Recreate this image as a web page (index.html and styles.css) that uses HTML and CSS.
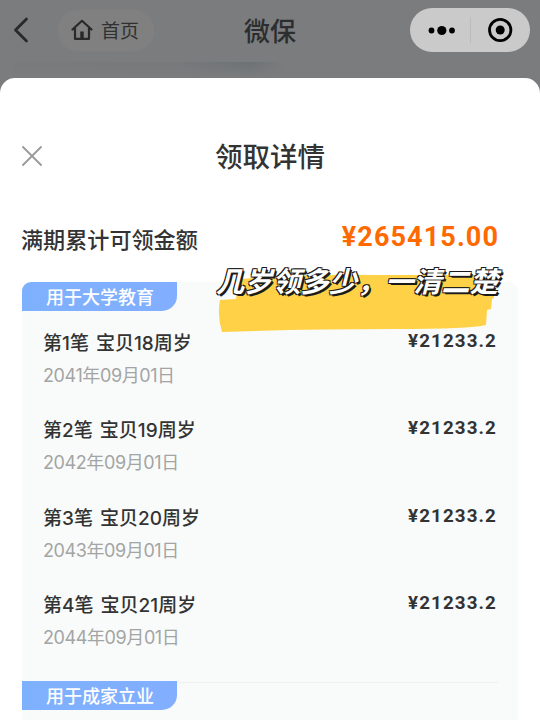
FILE: index.html
```html
<!DOCTYPE html>
<html lang="zh-CN">
<head>
    <meta charset="UTF-8">
    <meta name="viewport" content="width=device-width, initial-scale=1.0">
    <title>微保 - 领取详情</title>
    <link rel="stylesheet" href="styles.css">
</head>
<body>

<div class="page">
    <div class="navbar">
        <svg class="back" width="16" height="26" viewBox="0 0 16 26"><path d="M13.5 2 L2.5 13 L13.5 24"/></svg>
        <div class="home">
            <svg width="22" height="22" viewBox="0 0 22 22"><path d="M1.5 10.5 L11 1.8 L20.5 10.5 M4 9.5 V19.8 H18 V9.5"/><path d="M11 19 V12.5" class="door"/></svg>
            <span>首页</span>
        </div>
        <h1 class="app-name">微保</h1>
        <div class="capsule">
            <svg width="120" height="44" viewBox="0 0 120 44">
                <circle cx="21.5" cy="22.5" r="2.9"/>
                <circle cx="31.8" cy="22.5" r="4.6"/>
                <circle cx="42" cy="22.5" r="2.9"/>
                <path d="M60.5 9 V35" class="split"/>
                <circle cx="90.2" cy="22" r="10.7" class="ring"/>
                <circle cx="90.2" cy="22" r="4.5"/>
            </svg>
        </div>
    </div>
    <div class="banner"></div>

    <div class="sheet">
        <div class="sheet-head">
            <svg class="close" width="20" height="20" viewBox="0 0 20 20"><path d="M1 1 L19 19 M19 1 L1 19"/></svg>
            <h2>领取详情</h2>
        </div>

        <div class="total">
            <span class="total-label">满期累计可领金额</span>
            <span class="total-money">¥265415.00</span>
        </div>

        <div class="plan">
            <div class="tag tag-first">用于大学教育</div>
            <ul class="list">
                <li>
                    <div><p class="name">第1笔 宝贝18周岁</p><p class="date">2041年09月01日</p></div>
                    <span class="money">¥21233.2</span>
                </li>
                <li>
                    <div><p class="name">第2笔 宝贝19周岁</p><p class="date">2042年09月01日</p></div>
                    <span class="money">¥21233.2</span>
                </li>
                <li>
                    <div><p class="name">第3笔 宝贝20周岁</p><p class="date">2043年09月01日</p></div>
                    <span class="money">¥21233.2</span>
                </li>
                <li>
                    <div><p class="name">第4笔 宝贝21周岁</p><p class="date">2044年09月01日</p></div>
                    <span class="money">¥21233.2</span>
                </li>
            </ul>
            <div class="next">
                <div class="tag">用于成家立业</div>
            </div>
        </div>
    </div>

    <!-- marker note over the list -->
    <div class="note">
        <svg width="290" height="76" viewBox="0 0 290 76">
            <path d="M24 17 Q80 12 160 13 L279 13 L279 36 L277 37 L276 47 L272 48 L271 63 Q255 67 180 67 Q90 67 7 70 Q2 54 5 38 L21 37 L22 30 L25 29 Z"/>
        </svg>
        <p>几岁领多少，一清二楚</p>
    </div>
</div>

</body>
</html>
```
FILE: styles.css
```css
* { box-sizing: border-box; margin: 0; padding: 0; }
body { font-family: "Noto Sans CJK SC", sans-serif; color: #333; background: #7b7c7e; }
svg { display: block; flex: none; fill: none; }

.page { position: relative; width: 540px; height: 720px; overflow: hidden; background: #7b7c7e; }

.navbar { display: flex; align-items: center; height: 62px; padding: 0 10px 2px 13px; }
.back { stroke: #29292a; stroke-width: 2.8; stroke-linecap: round; stroke-linejoin: round; }
.home { display: flex; align-items: center; gap: 8px; width: 98px; height: 43px; margin-left: 28px; padding-left: 13px; border-radius: 22px; background: #808080; border: 1px solid #7d7e7f; font-size: 19px; line-height: 26px; color: #303031; }
.home svg { stroke: #29292a; stroke-width: 2.2; stroke-linejoin: round; stroke-linecap: round; }
.home .door { stroke-width: 3.5; stroke-linecap: butt; }
.app-name { margin-left: 89px; font-size: 26px; font-weight: 500; line-height: 40px; color: #2c2d2e; }
.capsule { margin-left: auto; border-radius: 22px; background: #cacaca; }
.capsule svg { fill: #000; }
.capsule .split { stroke: #bcbcbc; stroke-width: 1; }
.capsule .ring { fill: none; stroke: #000; stroke-width: 2.8; }

.banner { height: 16px; margin-left: 14px; width: 270px; background: linear-gradient(rgba(123, 124, 126, 0), #7b7c7e), linear-gradient(90deg, #797a7c 0%, #77797b 60%, #6c7274 88%, #7b7c7e 100%); }

.sheet { height: 642px; padding: 0 22px; border-radius: 15px 15px 0 0; background: #fff; }
.sheet-head { display: flex; align-items: center; height: 156px; }
.close { stroke: #999; stroke-width: 1.8; stroke-linecap: round; }
.sheet-head h2 { flex: 1; padding: 0 20px 2px 0; text-align: center; font-size: 27.5px; font-weight: 500; color: #333; }

.total { display: flex; justify-content: space-between; height: 48px; padding-right: 19px; }
.total-label { margin-left: -1px; font-size: 22.1px; font-weight: 500; line-height: 9px; }
.total-money { font-family: Roboto, sans-serif; font-size: 27px; font-weight: 700; line-height: 7px; letter-spacing: 1.1px; color: #ff6a00; }

.plan { height: 500px; border-radius: 9px; background: #f9fbfa; }
.tag { width: 155px; height: 29px; padding-left: 24px; border-radius: 0 0 15px 0; background: linear-gradient(90deg, #7eb1fd, #82aeff); color: #fff; font-size: 18px; font-weight: 500; line-height: 28px; }
.tag-first { border-top-left-radius: 9px; }

.list { height: 370px; padding: 17px 21px 0 21px; list-style: none; }
.list li { display: flex; justify-content: space-between; height: 87.3px; }
.name { font-family: Inter, "Noto Sans CJK SC", sans-serif; font-size: 19px; font-weight: 500; line-height: 32px; word-spacing: 2px; }
.date { font-family: Inter, "Noto Sans CJK SC", sans-serif; font-size: 18px; font-weight: 400; line-height: 32px; letter-spacing: -0.4px; color: #a3a4a4; }
.money { font-family: Roboto, sans-serif; font-size: 18.8px; font-weight: 700; line-height: 26px; letter-spacing: 1.1px; }
.next { background: linear-gradient(#eef0f0, #eef0f0) 0 1px / 476px 1px no-repeat; }

.note { position: absolute; left: 215px; top: 262px; width: 290px; }
.note svg { fill: #ffd147; }
.note p { position: absolute; left: 1px; top: -1px; white-space: nowrap; font-size: 28.2px; font-weight: 700; font-style: italic; line-height: 38px; color: #fff; text-shadow: -1px -1px 0 #1b1b1b, 1px -1px 0 #1b1b1b, -1px 1px 0 #1b1b1b, 1px 1px 0 #1b1b1b, 2px 2px 0 #1b1b1b; }
```
